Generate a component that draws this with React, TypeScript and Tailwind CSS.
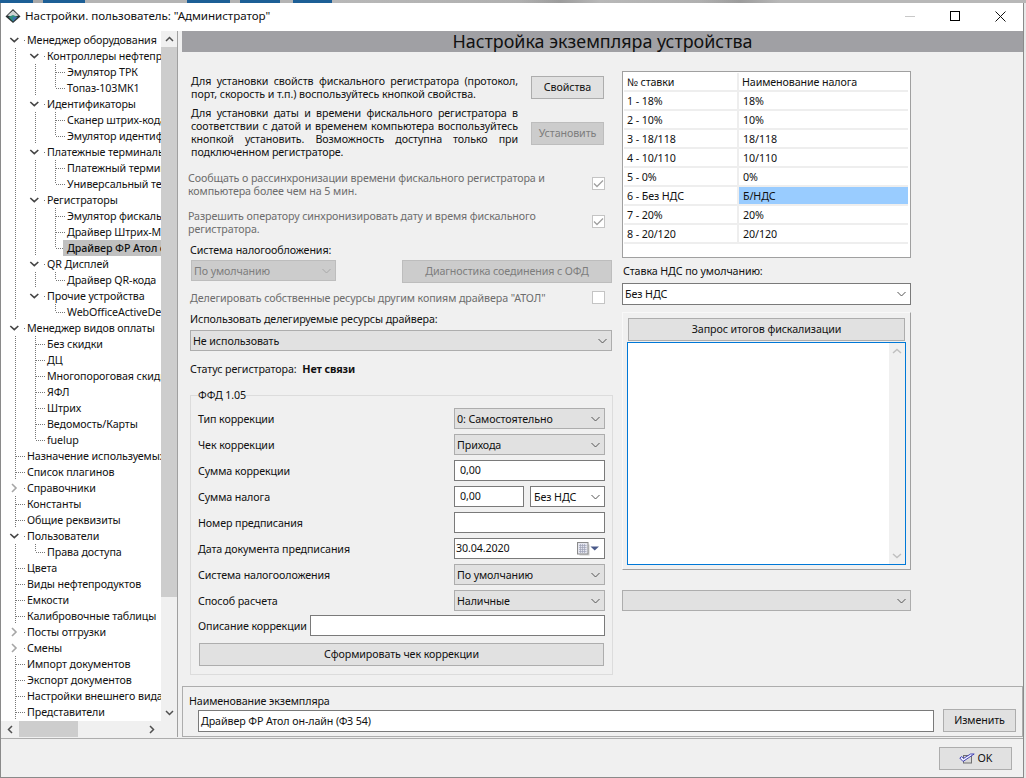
import type { ReactNode } from "react";

type Node = {
  label: string;
  depth: number;
  kind?: "open" | "closed";
  guides?: number[];
  last?: boolean;
  selected?: boolean;
};

const L0 = [0];
const L1 = [0, 1];

const tree: Node[] = [
  { label: "Менеджер оборудования", depth: 0, kind: "open" },
  { label: "Контроллеры нефтепродуктов", depth: 1, kind: "open", guides: L1 },
  { label: "Эмулятор ТРК", depth: 2, guides: L1 },
  { label: "Топаз-103МК1", depth: 2, guides: L1, last: true },
  { label: "Идентификаторы", depth: 1, kind: "open", guides: L1 },
  { label: "Сканер штрих-кода", depth: 2, guides: L1 },
  { label: "Эмулятор идентификаторов", depth: 2, guides: L1, last: true },
  { label: "Платежные терминалы", depth: 1, kind: "open", guides: L1 },
  { label: "Платежный терминал", depth: 2, guides: L1 },
  { label: "Универсальный терминал", depth: 2, guides: L1, last: true },
  { label: "Регистраторы", depth: 1, kind: "open", guides: L1 },
  { label: "Эмулятор фискального регистратора", depth: 2, guides: L1 },
  { label: "Драйвер Штрих-М", depth: 2, guides: L1 },
  { label: "Драйвер ФР Атол он-лайн", depth: 2, guides: L1, last: true, selected: true },
  { label: "QR Дисплей", depth: 1, kind: "open", guides: L1 },
  { label: "Драйвер QR-кода", depth: 2, guides: L1, last: true },
  { label: "Прочие устройства", depth: 1, kind: "open", guides: L0, last: true },
  { label: "WebOfficeActiveDevice", depth: 2, guides: L0, last: true },
  { label: "Менеджер видов оплаты", depth: 0, kind: "open", guides: L0 },
  { label: "Без скидки", depth: 1, guides: L0 },
  { label: "ДЦ", depth: 1, guides: L0 },
  { label: "Многопороговая скидка", depth: 1, guides: L0 },
  { label: "ЯФЛ", depth: 1, guides: L0 },
  { label: "Штрих", depth: 1, guides: L0 },
  { label: "Ведомость/Карты", depth: 1, guides: L0 },
  { label: "fuelup", depth: 1, guides: L0, last: true },
  { label: "Назначение используемых", depth: 0, guides: L0 },
  { label: "Список плагинов", depth: 0, guides: L0 },
  { label: "Справочники", depth: 0, kind: "closed", guides: L0 },
  { label: "Константы", depth: 0, guides: L0 },
  { label: "Общие реквизиты", depth: 0, guides: L0 },
  { label: "Пользователи", depth: 0, kind: "open", guides: L0 },
  { label: "Права доступа", depth: 1, guides: L0, last: true },
  { label: "Цвета", depth: 0, guides: L0 },
  { label: "Виды нефтепродуктов", depth: 0, guides: L0 },
  { label: "Емкости", depth: 0, guides: L0 },
  { label: "Калибровочные таблицы", depth: 0, guides: L0 },
  { label: "Посты отгрузки", depth: 0, kind: "closed", guides: L0 },
  { label: "Смены", depth: 0, kind: "closed", guides: L0 },
  { label: "Импорт документов", depth: 0, guides: L0 },
  { label: "Экспорт документов", depth: 0, guides: L0 },
  { label: "Настройки внешнего вида", depth: 0, guides: L0 },
  { label: "Представители", depth: 0, guides: L0 },
];

const rates = [
  ["1 - 18%", "18%"],
  ["2 - 10%", "10%"],
  ["3 - 18/118", "18/118"],
  ["4 - 10/110", "10/110"],
  ["5 - 0%", "0%"],
  ["6 - Без НДС", "Б/НДС"],
  ["7 - 20%", "20%"],
  ["8 - 20/120", "20/120"],
];

function Chevron({ className = "text-[#555]" }: { className?: string }) {
  return (
    <svg width="9" height="6" viewBox="0 0 9 6" className={`shrink-0 ${className}`}>
      <path d="M0.5 1 L4.5 5 L8.5 1" fill="none" stroke="currentColor" strokeWidth="1" />
    </svg>
  );
}

function TreeRow({ node }: { node: Node }) {
  const x = 14 + node.depth * 20;
  const width = x + 11;
  const guides = node.guides ?? [];
  return (
    <div className="flex h-4 items-center whitespace-nowrap">
      <svg width={width} height="16" className="shrink-0">
        <g stroke="#777" strokeDasharray="1 1" strokeWidth="1" shapeRendering="crispEdges">
          {guides
            .filter((g) => g < node.depth)
            .map((g) => (
              <line key={g} x1={14.5 + g * 20} x2={14.5 + g * 20} y1="0" y2="16" />
            ))}
          {!node.kind && (
            <>
              <line x1={x + 0.5} x2={x + 0.5} y1="0" y2={node.last ? 8 : 16} />
              <line x1={x + 1} x2={x + 10} y1="8.5" y2="8.5" />
            </>
          )}
          {node.kind && <line x1={x + 9} x2={x + 11} y1="8.5" y2="8.5" />}
        </g>
        {node.kind === "open" && (
          <path d={`M${x - 4.7} 6 L${x - 0.7} 9.7 L${x + 3.3} 6`} fill="none" stroke="#444" strokeWidth="1.6" />
        )}
        {node.kind === "closed" && (
          <path d={`M${x - 3} 4 L${x + 1} 8 L${x - 3} 12`} fill="none" stroke="#a6a6a6" strokeWidth="1.6" />
        )}
      </svg>
      <span
        className={node.selected ? "-ml-[3px] flex-1 bg-[#c0c0c0] pl-[4px] font-medium leading-4" : "pl-[1px]"}
      >
        {node.label}
      </span>
    </div>
  );
}

function Button({ children, className = "", disabled }: { children: ReactNode; className?: string; disabled?: boolean }) {
  return (
    <div
      className={`flex items-center justify-center border ${
        disabled ? "border-[#bdbdbd] bg-[#cccccc] text-[#7d7d7d]" : "border-[#adadad] bg-[#e1e1e1]"
      } ${className}`}
    >
      {children}
    </div>
  );
}

function Select({ value, className = "", white, disabled }: { value: string; className?: string; white?: boolean; disabled?: boolean }) {
  const look = white
    ? "border-[#7a7a7a] bg-white"
    : disabled
      ? "border-[#bdbdbd] bg-[#cccccc] text-[#7d7d7d]"
      : "border-[#adadad] bg-[#e1e1e1]";
  return (
    <div className={`flex h-[21px] items-center justify-between border pl-[2px] pr-[4px] ${look} ${className}`}>
      <span className="pt-px">{value}</span>
      <Chevron className={disabled ? "text-[#a8a8a8]" : "text-[#555]"} />
    </div>
  );
}

function Input({ value = "", className = "" }: { value?: string; className?: string }) {
  return (
    <div className={`flex h-[21px] items-center border border-[#7a7a7a] bg-white pl-[5px] ${className}`}>{value}</div>
  );
}

function Checkbox({ checked }: { checked?: boolean }) {
  return (
    <div className="mt-[5px] flex size-[13px] shrink-0 items-center justify-center border border-[#c4c4c4] bg-white">
      {checked && (
        <svg width="11" height="9" viewBox="0 0 11 9">
          <path d="M1 4.5 L4 7.5 L10 1.5" fill="none" stroke="#a0a0a0" strokeWidth="1.3" />
        </svg>
      )}
    </div>
  );
}

function Justified({ lines }: { lines: string[] }) {
  return (
    <div className="w-[327px] leading-[13px]">
      {lines.map((line, i) => (
        <div key={line} className={i < lines.length - 1 ? "text-justify [text-align-last:justify]" : ""}>
          {line}
        </div>
      ))}
    </div>
  );
}

function FormRow({ label, children }: { label: string; children: ReactNode }) {
  return (
    <div className="flex h-[21px] items-center justify-between">
      <span className="whitespace-nowrap pt-px">{label}</span>
      {children}
    </div>
  );
}

function TreePanel() {
  return (
    <div className="flex h-[706px] w-[177px] flex-col border-r border-[#a0a0a0] bg-white">
      <div className="flex min-h-0 flex-1">
        <div className="w-[160px] overflow-hidden pt-px">
          {tree.map((node) => (
            <TreeRow key={node.label} node={node} />
          ))}
        </div>
        <div className="flex w-4 flex-col bg-[#f0f0f0]">
          <div className="flex h-4 items-center justify-center">
            <svg width="9" height="6" viewBox="0 0 9 6">
              <path d="M1 5 L4.5 1.5 L8 5" fill="none" stroke="#505050" strokeWidth="1.5" />
            </svg>
          </div>
          <div className="h-[550px] bg-[#cdcdcd]" />
          <div className="mt-auto flex h-4 items-center justify-center">
            <svg width="9" height="6" viewBox="0 0 9 6">
              <path d="M1 1 L4.5 4.5 L8 1" fill="none" stroke="#505050" strokeWidth="1.5" />
            </svg>
          </div>
        </div>
      </div>
      <div className="flex h-[16px] items-center bg-[#f0f0f0]">
        <div className="flex w-[18px] justify-center">
          <svg width="6" height="9" viewBox="0 0 6 9">
            <path d="M5 1 L1.5 4.5 L5 8" fill="none" stroke="#505050" strokeWidth="1.5" />
          </svg>
        </div>
        <div className="h-full w-[59px] bg-[#cdcdcd]" />
        <div className="ml-[65px] flex w-[18px] justify-center">
          <svg width="6" height="9" viewBox="0 0 6 9">
            <path d="M1 1 L4.5 4.5 L1 8" fill="none" stroke="#505050" strokeWidth="1.5" />
          </svg>
        </div>
      </div>
    </div>
  );
}

function LeftColumn() {
  return (
    <div className="w-[434px]">
      <div className="mt-[23px] flex">
        <div className="w-[343px] pl-[3px]">
          <Justified
            lines={[
              "Для  установки свойств фискального регистратора (протокол,",
              "порт, скорость и т.п.) воспользуйтесь кнопкой    свойства.",
            ]}
          />
          <div className="mt-[6px]">
            <Justified
              lines={[
                "Для установки даты и времени фискального регистратора в",
                "соответствии с датой и временем компьютера воспользуйтесь",
                "кнопкой установить. Возможность доступна только при",
                "подключенном регистраторе.",
              ]}
            />
          </div>
        </div>
        <div className="pt-px">
          <Button className="h-[23px] w-[73px]">Свойства</Button>
          <Button disabled className="mt-[23px] h-[23px] w-[73px]">
            Установить
          </Button>
        </div>
      </div>

      <div className="mt-[13px] flex w-[417px] justify-between leading-[13px] text-[#6d6d6d]">
        <div>
          Сообщать о рассинхронизации времени фискального регистратора и
          <br />
          компьютера более чем на 5 мин.
        </div>
        <Checkbox checked />
      </div>
      <div className="mt-[12px] flex w-[417px] justify-between leading-[13px] text-[#6d6d6d]">
        <div>
          Разрешить оператору синхронизировать дату и время фискального
          <br />
          регистратора.
        </div>
        <Checkbox checked />
      </div>

      <div className="mt-[8px] pl-[2px] leading-[13px]">Система налогообложения:</div>
      <div className="mt-[3px] flex justify-between pl-[3px] pr-[10px]">
        <Select disabled value="По умолчанию" className="w-[145px]" />
        <Button disabled className="h-[23px] w-[210px]">
          Диагностика соединения с ОФД
        </Button>
      </div>
      <div className="mt-[8px] flex w-[417px] justify-between leading-[13px] text-[#6d6d6d]">
        <div className="pl-[2px] pt-px">Делегировать собственные ресурсы другим копиям драйвера "АТОЛ"</div>
        <div className="-mt-[5px]">
          <Checkbox />
        </div>
      </div>
      <div className="mt-[8px] pl-[2px] leading-[13px]">Использовать делегируемые ресурсы драйвера:</div>
      <Select value="Не использовать" className="ml-[2px] mt-[4px] w-[422px]" />
      <div className="mt-[12px] pl-[2px] leading-[13px]">
        Статус регистратора: <span className="ml-[3px] font-bold">Нет связи</span>
      </div>

      <fieldset className="ml-[2px] mt-[13px] h-[286px] w-[423px] border border-[#dcdcdc] px-[7px]">
        <legend className="ml-0 leading-[13px]">ФФД 1.05</legend>
        <div className="mt-[6px] flex flex-col gap-[5px]">
          <FormRow label="Тип коррекции">
            <Select value="0: Самостоятельно" className="w-[151px]" />
          </FormRow>
          <FormRow label="Чек коррекции">
            <Select value="Прихода" className="w-[151px]" />
          </FormRow>
          <FormRow label="Сумма коррекции">
            <Input value="0,00" className="w-[151px]" />
          </FormRow>
          <FormRow label="Сумма налога">
            <div className="flex w-[151px] justify-between">
              <Input value="0,00" className="w-[70px]" />
              <Select value="Без НДС" white className="w-[75px] !pl-[3px]" />
            </div>
          </FormRow>
          <FormRow label="Номер предписания">
            <Input className="w-[151px]" />
          </FormRow>
          <FormRow label="Дата документа предписания">
            <div className="flex h-[21px] w-[151px] items-center justify-between border border-[#7a7a7a] bg-white pl-px pr-[4px]">
              <span>30.04.2020</span>
              <svg width="23" height="14" viewBox="0 0 23 14">
                <rect x="2.5" y="2.5" width="10" height="11" fill="#b0b0b0" opacity="0.6" />
                <rect x="0.5" y="0.5" width="10.5" height="11.5" fill="#e4e5ee" stroke="#8a8a8a" />
                <path d="M2 3.5H9.5M2 5.5H9.5M2 7.5H9.5M2 9.5H9.5M3.5 2V11M5.5 2V11M7.5 2V11" stroke="#9fa3b8" strokeWidth="0.7" />
                <path d="M13.5 4.5H22L17.7 8.5Z" fill="#4a5a8a" />
              </svg>
            </div>
          </FormRow>
          <FormRow label="Система налогооложения">
            <Select value="По умолчанию" className="w-[151px]" />
          </FormRow>
          <FormRow label="Способ расчета">
            <Select value="Наличные" className="w-[151px]" />
          </FormRow>
        </div>
        <div className="mt-[4px]">
          <FormRow label="Описание коррекции">
            <Input className="w-[295px]" />
          </FormRow>
        </div>
        <Button className="ml-px mt-[7px] h-[23px] w-[405px]">Сформировать чек коррекции</Button>
      </fieldset>
    </div>
  );
}

function RightColumn() {
  return (
    <div className="w-[289px]">
      <div className="mt-[19px] h-[187px] border border-[#a0a0a0] bg-white pl-px pt-px">
        <div className="grid grid-cols-[115px_169px]">
          <div className="flex h-[19px] items-center border-b-2 border-r-2 border-[#eeeeee] pl-[3px] pt-px">№ ставки</div>
          <div className="flex h-[19px] items-center border-b-2 border-[#eeeeee] pl-[3px] pt-px">Наименование налога</div>
          {rates.map(([rate, name]) => (
            <div key={rate} className="contents">
              <div className="flex h-[19px] items-center border-b-2 border-r-2 border-[#eeeeee] pl-[3px] pt-px">{rate}</div>
              <div
                className={`flex h-[19px] items-center border-b-2 border-[#eeeeee] pl-[4px] pt-px ${
                  name === "Б/НДС" ? "bg-[#99ccff]" : ""
                }`}
              >
                {name}
              </div>
            </div>
          ))}
        </div>
      </div>
      <div className="mt-[7px] pl-px leading-[13px]">Ставка НДС по умолчанию:</div>
      <Select value="Без НДС" white className="mt-[5px] !h-[22px] w-[289px]" />
      <div className="mt-[7px] h-[258px] border border-b-[#a0a0a0] border-l-[#f8f8f8] border-r-[#a0a0a0] border-t-[#f8f8f8] pl-[4px] pr-[4px] pt-[5px]">
        <Button className="ml-px h-[23px] w-[277px]">Запрос итогов фискализации</Button>
        <div className="mt-px flex h-[223px] w-[279px] justify-end border border-[#0078d7] bg-white">
          <div className="flex w-4 flex-col justify-between bg-[#f0f0f0] py-[5px]">
            <svg width="16" height="6" viewBox="0 0 16 6">
              <path d="M4 5 L8 1.5 L12 5" fill="none" stroke="#c0c0c0" strokeWidth="1.5" />
            </svg>
            <svg width="16" height="6" viewBox="0 0 16 6">
              <path d="M4 1 L8 4.5 L12 1" fill="none" stroke="#c0c0c0" strokeWidth="1.5" />
            </svg>
          </div>
        </div>
      </div>
      <Select value="" className="mt-[20px] w-[289px]" />
    </div>
  );
}

export default function App() {
  return (
    <div className="h-[778px] w-[1026px] overflow-hidden bg-[#e8e8e8] font-['Noto_Sans','Liberation_Sans',sans-serif] text-[10.7px] tracking-[-0.1px] text-[#111]">
      <div className="h-[3px] bg-[linear-gradient(90deg,#1d5f96_33px,#a8a8a8_33px,#a8a8a8_43px,#1d5f96_43px,#1d5f96_85px,#b4b4b4_85px,#b4b4b4_187px,#1d5f96_187px,#1d5f96_230px,#b4b4b4_230px,#b4b4b4_240px,#1d5f96_240px,#1d5f96_280px,#b4b4b4_280px,#b4b4b4_293px,#1d5f96_293px,#1d5f96_332px,#b8b8b8_332px,#b0b0b0_520px,#9c9c9c_560px,#b8b8b8_600px,#b0b0b0_700px,#9c9c9c_740px,#b8b8b8_780px)]" />
      <div className="w-[1024px] border-x border-b border-[#8a8a8a] bg-[#f0f0f0]">
        <div className="flex h-[28px] items-center bg-white pb-[2px] pl-[4px]">
          <svg width="16" height="16" viewBox="0 0 16 16">
            <path d="M8 1 L15.5 8.5 L8 15 L0.5 8.5Z" fill="#2b3234" />
            <path d="M8 2.5 L13.5 7.5 L8 9 L2.5 7.5Z" fill="#cfd4d4" />
            <path d="M3.5 9 L8 7 L12.5 9 L8 13.5Z" fill="#2f8f80" />
            <path d="M8 9 L12.5 9 L8 13.5Z" fill="#3f6fb0" />
          </svg>
          <span className="ml-[4px] text-[11.6px] tracking-[-0.05px]">Настройки. пользователь: "Администратор"</span>
          <div className="ml-auto flex items-center">
            <div className="h-px w-[10px] bg-[#c8c8c8]" />
            <div className="ml-[35px] size-[10px] border border-black" />
            <svg width="11" height="11" viewBox="0 0 11 11" className="ml-[35px] mr-[17px]">
              <path d="M0.5 0.5 L10.5 10.5 M10.5 0.5 L0.5 10.5" stroke="#111" strokeWidth="1" />
            </svg>
          </div>
        </div>

        <div className="flex">
          <TreePanel />
          <div className="ml-[4px] w-[841px]">
            <div className="flex h-[21px] items-center justify-center bg-[#a0a0a4] text-[17.9px] leading-none tracking-normal text-[#111]">
              Настройка экземпляра устройства
            </div>
            <div className="flex h-[634px] pl-[6px]">
              <LeftColumn />
              <RightColumn />
            </div>
            <div className="h-[51px] border border-[#adadad] pl-[6px] pr-[6px]">
              <div className="mt-[8px] leading-[13px]">Наименование экземпляра</div>
              <div className="mt-[1px] flex items-start justify-between pl-[9px]">
                <Input value="Драйвер ФР Атол он-лайн (ФЗ 54)" className="mt-[1px] !h-[22px] w-[736px] !pl-[2px]" />
                <Button className="h-[23px] w-[73px]">Изменить</Button>
              </div>
            </div>
          </div>
        </div>

        <div className="mt-[1px] flex h-[39px] items-center justify-end border-t border-[#adadad] pr-[11px]">
          <Button className="h-[23px] w-[73px] gap-[3px]">
            <svg width="16" height="12" viewBox="0 0 16 12">
              <rect x="4.5" y="3.5" width="8" height="7.5" fill="#d8d8d8" stroke="#707070" />
              <path d="M0.8 6 L4 9.5 L15.2 2 L11.5 2 L4.5 6.5 L2.8 4.5Z" fill="#f2f2ff" stroke="#3636b0" strokeWidth="0.9" />
            </svg>
            OK
          </Button>
        </div>
      </div>
    </div>
  );
}
